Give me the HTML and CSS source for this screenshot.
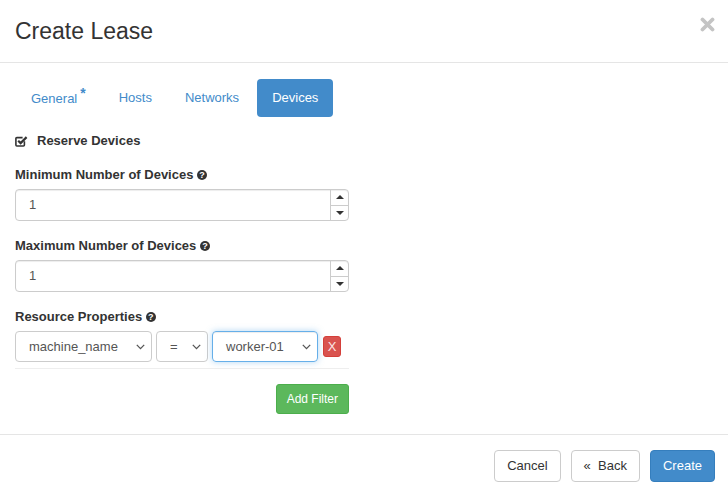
FILE: index.html
```html
<!DOCTYPE html>
<html lang="en">
<head>
<meta charset="utf-8">
<title>Create Lease</title>
<link rel="stylesheet" href="styles.css">
</head>
<body>
<div class="modal">
  <div class="modal-header">
    <h3 class="modal-title">Create Lease</h3>
    <button class="close" type="button" aria-label="Close">
      <svg width="15" height="15" viewBox="0 0 15 15"><path d="M2.5 2.5 L12.5 12.5 M12.5 2.5 L2.5 12.5" stroke="#c4c4c4" stroke-width="3.8" stroke-linecap="round" fill="none"/></svg>
    </button>
  </div>
  <div class="modal-body">
    <ul class="pills">
      <li class="pill"><a>General<span class="req">*</span></a></li>
      <li class="pill"><a>Hosts</a></li>
      <li class="pill"><a>Networks</a></li>
      <li class="pill active"><a>Devices</a></li>
    </ul>
    <div class="pane">
      <div class="checkbox">
        <svg class="check-icon" width="13" height="12" viewBox="0 0 13 12"><path d="M9.4 6.2 V10 a1 1 0 0 1 -1 1 H1.9 a1 1 0 0 1 -1 -1 V3.6 a1 1 0 0 1 1 -1 H7.6" stroke="#333" stroke-width="1.6" fill="none"/><path d="M3.2 5.8 L5.6 8.1 L11.6 2.1" stroke="#333" stroke-width="2.2" fill="none"/></svg>
        <span class="check-label">Reserve Devices</span>
      </div>
      <div class="form-group">
        <label class="control-label">Minimum Number of Devices <span class="help">?</span></label>
        <div class="spin-input">
          <span class="spin-value">1</span>
          <span class="spin-btns"><span class="spin-up"><i class="tri-up"></i></span><span class="spin-down"><i class="tri-down"></i></span></span>
        </div>
      </div>
      <div class="form-group">
        <label class="control-label">Maximum Number of Devices <span class="help">?</span></label>
        <div class="spin-input">
          <span class="spin-value">1</span>
          <span class="spin-btns"><span class="spin-up"><i class="tri-up"></i></span><span class="spin-down"><i class="tri-down"></i></span></span>
        </div>
      </div>
      <div class="form-group last">
        <label class="control-label">Resource Properties <span class="help">?</span></label>
        <div class="filter-row">
          <div class="select sel-name"><span>machine_name</span><svg width="9" height="6" viewBox="0 0 9 6"><path d="M0.8 0.9 L4.5 4.6 L8.2 0.9" stroke="#555" stroke-width="1.3" fill="none"/></svg></div>
          <div class="select sel-op"><span>=</span><svg width="9" height="6" viewBox="0 0 9 6"><path d="M0.8 0.9 L4.5 4.6 L8.2 0.9" stroke="#555" stroke-width="1.3" fill="none"/></svg></div>
          <div class="select sel-val focus"><span>worker-01</span><svg width="9" height="6" viewBox="0 0 9 6"><path d="M0.8 0.9 L4.5 4.6 L8.2 0.9" stroke="#555" stroke-width="1.3" fill="none"/></svg></div>
          <button class="btn-remove" type="button">X</button>
        </div>
      </div>
      <hr class="divider">
      <div class="add-row">
        <button class="btn btn-sm btn-success" type="button">Add Filter</button>
      </div>
    </div>
  </div>
  <div class="modal-footer">
    <button class="btn btn-default" type="button">Cancel</button>
    <button class="btn btn-default" type="button">&laquo;&nbsp; Back</button>
    <button class="btn btn-primary" type="button">Create</button>
  </div>
</div>
</body>
</html>
```
FILE: styles.css
```css
html, body {
  margin: 0;
  padding: 0;
  height: 100%;
}
body {
  font-family: "Liberation Sans", Arial, Helvetica, sans-serif;
  font-size: 13px;
  line-height: 18px;
  color: #333;
  background: #fff;
}
.modal {
  display: flex;
  flex-direction: column;
  height: 497px;
  box-sizing: border-box;
}
.modal-header {
  height: 62px;
  border-bottom: 1px solid #e5e5e5;
  display: flex;
  align-items: center;
  justify-content: space-between;
  padding: 0 13px 0 15px;
  flex: none;
}
.modal-title {
  margin: 0;
  font-size: 23px;
  font-weight: normal;
  line-height: 25px;
  color: #333;
}
.close {
  align-self: flex-start;
  margin-top: 17px;
  padding: 0;
  border: 0;
  background: none;
  width: 15px;
  height: 15px;
  display: block;
}
.close svg { display: block; }
.modal-body {
  flex: 1;
  padding: 16px 15px 0 15px;
}
.pills {
  list-style: none;
  margin: 0 0 0 1px;
  padding: 0;
  display: flex;
}
.pill { margin-right: 3px; }
.pill a {
  display: block;
  padding: 10px 15px;
  line-height: 18px;
  border-radius: 4px;
  color: #428bca;
}
.pill.active a {
  background: #428bca;
  color: #fff;
}
.req {
  color: #428bca;
  font-size: 14px;
  font-weight: bold;
  position: relative;
  top: -5px;
  margin-left: 3px;
}
.pane {
  width: 334px;
  margin-top: 14px;
}
.checkbox {
  display: flex;
  align-items: center;
  height: 18px;
}
.check-icon {
  display: block;
  margin-right: 9px;
  margin-top: -1px;
}
.check-label { font-weight: bold; }
.form-group { margin-top: 16px; }
.form-group + .form-group { margin-top: 16px; }
.form-group.last { margin-top: 16px; }
.control-label {
  display: flex;
  align-items: center;
  font-weight: bold;
  line-height: 18px;
  margin-bottom: 5px;
  white-space: pre;
}
.help {
  display: inline-flex;
  align-items: center;
  justify-content: center;
  width: 10px;
  height: 10px;
  border-radius: 50%;
  background: #333;
  color: #fff;
  font-size: 9px;
  line-height: 10px;
  font-weight: bold;
}
.spin-input {
  display: flex;
  height: 32px;
  box-sizing: border-box;
  border: 1px solid #ccc;
  border-radius: 4px;
  box-shadow: inset 0 1px 1px rgba(0,0,0,.075);
  overflow: hidden;
}
.spin-value {
  flex: 1;
  padding-left: 13px;
  line-height: 30px;
  color: #555;
}
.spin-btns {
  width: 17px;
  display: flex;
  flex-direction: column;
  border-left: 1px solid #ccc;
}
.spin-up, .spin-down {
  flex: 1;
  display: flex;
  align-items: center;
  justify-content: center;
}
.spin-down { border-top: 1px solid #ccc; }
.tri-up {
  width: 0; height: 0;
  border-left: 4px solid transparent;
  border-right: 4px solid transparent;
  border-bottom: 4px solid #333;
}
.tri-down {
  width: 0; height: 0;
  border-left: 4px solid transparent;
  border-right: 4px solid transparent;
  border-top: 4px solid #333;
}
.filter-row {
  display: flex;
  align-items: center;
}
.select {
  display: flex;
  align-items: center;
  justify-content: space-between;
  height: 31px;
  box-sizing: border-box;
  border: 1px solid #ccc;
  border-radius: 4px;
  padding: 0 6px 0 13px;
  color: #555;
  margin-right: 4px;
}
.select svg { display: block; margin-top: 1px; }
.sel-name { width: 137px; }
.sel-op { width: 52px; }
.sel-val { width: 106px; margin-right: 5px; }
.select.focus {
  border-color: #66afe9;
  box-shadow: inset 0 1px 1px rgba(0,0,0,.075), 0 0 6px rgba(102,175,233,.5);
}
.btn-remove {
  width: 18px;
  height: 21px;
  padding: 0;
  border: 1px solid #d43f3a;
  border-radius: 3px;
  background: #d9534f;
  color: #fbe5e4;
  font-family: inherit;
  font-size: 13px;
  line-height: 19px;
}
.divider {
  border: 0;
  border-top: 1px solid #eee;
  margin: 6px 0 0 0;
}
.add-row {
  display: flex;
  justify-content: flex-end;
  margin-top: 15px;
}
.btn {
  font-family: inherit;
  font-size: 13px;
  line-height: 18px;
  padding: 6px 12px;
  border: 1px solid transparent;
  border-radius: 4px;
  box-sizing: border-box;
}
.btn-sm {
  font-size: 12px;
  line-height: 18px;
  padding: 5px 10px;
  border-radius: 3px;
}
.btn-success {
  background: #5cb85c;
  border-color: #4cae4c;
  color: #fff;
}
.btn-default {
  background: #fff;
  border-color: #ccc;
  color: #333;
}
.btn-primary {
  background: #428bca;
  border-color: #357ebd;
  color: #fff;
}
.modal-footer {
  flex: none;
  border-top: 1px solid #e5e5e5;
  padding: 15px 13px 15px 15px;
  display: flex;
  justify-content: flex-end;
  gap: 10px;
}
```
